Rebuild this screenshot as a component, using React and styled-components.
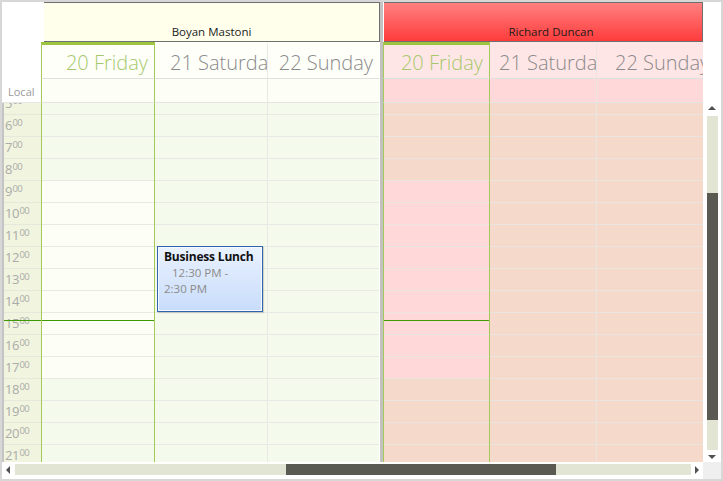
import React from 'react';
import styled, { createGlobalStyle, css } from 'styled-components';

const GlobalStyle = createGlobalStyle`
  body {
    margin: 0;
    background: #fff;
    font-family: "Open Sans", "Noto Sans", sans-serif;
  }
`;

const ROW = 22;
const HOURS = Array.from({ length: 18 }, (_, i) => 5 + i);
const NOW_TOP = 228;

const isWork = (h) => h >= 9 && h <= 17;

const themes = {
  boyan: {
    header: '#ffffec',
    dayHead: '#fefff9',
    allDay: '#fdfff6',
    work: '#fdfff6',
    off: '#f5fbec',
    line: '#e8e9e4',
  },
  richard: {
    header: 'linear-gradient(#ff8080, #ff3c3c)',
    dayHead: '#ffe6e6',
    allDay: '#ffd9d9',
    work: '#ffd9d9',
    off: '#f5d9cb',
    line: '#ebe5e1',
  },
};

const resources = [
  {
    name: 'Boyan Mastoni',
    theme: 'boyan',
    width: 339,
    inset: 3,
    shift: 0,
    days: [
      { label: '20 Friday', width: 114, today: true, pad: 6 },
      { label: '21 Saturday', width: 113, weekend: true, pad: 15, event: true },
      { label: '22 Sunday', width: 112, weekend: true, pad: 6, last: true },
    ],
  },
  {
    name: 'Richard Duncan',
    theme: 'richard',
    width: 320,
    inset: 1,
    shift: 16,
    days: [
      { label: '20 Friday', width: 107, today: true, pad: 6 },
      { label: '21 Saturday', width: 107, weekend: true, pad: 9 },
      { label: '22 Sunday', width: 113, weekend: true, pad: 18, left: true },
    ],
  },
];

const Scheduler = styled.div`
  width: 723px;
  height: 481px;
  box-sizing: border-box;
  border: 2px solid #d7d7d7;
  display: flex;
  flex-direction: column;
  overflow: hidden;
  background: #fff;
`;

const Main = styled.div`
  display: flex;
  height: 460px;
`;

const TimeColumn = styled.div`
  width: 39px;
  flex: none;
  display: flex;
  flex-direction: column;
`;

const TimeHead = styled.div`
  height: 77px;
  background: #fff;
`;

const LocalCell = styled.div`
  height: 24px;
  box-sizing: border-box;
  border-bottom: 1px solid #e6e6e6;
  display: flex;
  align-items: flex-end;
  padding: 0 0 3px 6px;
  font-size: 11px;
  color: #9a9a9a;
  position: relative;
  z-index: 1;
`;

const TimeBody = styled.div`
  flex: 1;
  overflow: hidden;
  background: #f1f4de;
  border-left: 2px solid #c4c4c4;
`;

const Stack = styled.div`
  position: relative;
  margin-top: -11px;
`;

const TimeRow = styled.div`
  height: ${ROW}px;
  box-sizing: border-box;
  border-top: 1px solid #e6e8dc;
  padding: 2px 0 0 1px;
  font-size: 13px;
  line-height: 16px;
  color: #ababab;
  letter-spacing: -0.5px;
`;

const Minutes = styled.span`
  display: inline-block;
  vertical-align: top;
  font-size: 9.5px;
  line-height: 12px;
  margin-left: 0.5px;
`;

const NowLine = styled.div`
  position: absolute;
  top: ${NOW_TOP}px;
  left: ${(p) => p.$from || 0}px;
  right: 0;
  height: 1px;
  background: #3d9a00;
  z-index: 2;
`;

const Separator = styled.div`
  width: 3px;
  flex: none;
  background: #c2c2c2;
`;

const ResourceGroup = styled.div`
  width: ${(p) => p.$width}px;
  flex: none;
  display: flex;
  flex-direction: column;
  overflow: hidden;
`;

const ResourceHeader = styled.div`
  height: 40px;
  box-sizing: border-box;
  margin-left: ${(p) => p.$inset}px;
  border: 1px solid #6f6f6f;
  border-left: none;
  background: ${(p) => p.$bg};
  display: flex;
  align-items: flex-end;
  justify-content: center;
  padding: 0 0 2px ${(p) => p.$shift}px;
  font-size: 11.5px;
  color: #1c1c1c;
  white-space: nowrap;
`;

const Row = styled.div`
  display: flex;
  height: ${(p) => p.$h}px;
  flex: ${(p) => (p.$grow ? 1 : 'none')};
  overflow: hidden;
`;

const todayBorders = css`
  border-left: 1px solid #a6ca5a;
  border-right: 1px solid #a6ca5a;
`;

const Cell = styled.div`
  width: ${(p) => p.$width}px;
  flex: none;
  box-sizing: border-box;
  border-right: 1px solid ${(p) => (p.$last ? 'transparent' : p.$line)};
  ${(p) => p.$today && todayBorders}
`;

const DayHead = styled(Cell)`
  background: ${(p) => p.$bg};
  border-bottom: 1px solid #e0e0e0;
  border-top: 3px solid ${(p) => (p.$today ? '#9cc43e' : p.$bg)};
  padding: 4px 6px 0 ${(p) => p.$pad}px;
  text-align: ${(p) => (p.$left ? 'left' : 'right')};
  white-space: nowrap;
  overflow: hidden;
  font-size: 20px;
  font-weight: 300;
  line-height: 28px;
  color: ${(p) => (p.$today ? '#a6c86c' : '#8a8a8a')};
`;

const AllDayCell = styled(Cell)`
  background: ${(p) => p.$bg};
  border-bottom: 1px solid #e4e4e4;
`;

const DayColumn = styled(Cell)`
  overflow: visible;
`;

const Slot = styled.div`
  height: ${ROW}px;
  box-sizing: border-box;
  border-top: 1px solid ${(p) => p.$line};
  background: ${(p) => p.$bg};
`;

const Appointment = styled.div`
  position: absolute;
  top: ${7 * ROW}px;
  left: 2px;
  width: 106px;
  height: 66px;
  box-sizing: border-box;
  border: 1px solid #3263ad;
  box-shadow: inset 0 0 0 1px #f4f8ff, 1px 1px 1px rgba(0, 0, 0, 0.15);
  background: linear-gradient(#eaf2ff, #c8dcfa);
  padding: 2px 6px;
  font-size: 12px;
  line-height: 16px;
  z-index: 3;
`;

const Subject = styled.div`
  font-weight: 700;
  color: #111;
  letter-spacing: -0.2px;
`;

const When = styled.div`
  color: #8b8b8b;
  text-indent: ${(p) => (p.$indent ? 8 : 0)}px;
  font-size: 11.5px;
`;

const VScroll = styled.div`
  width: 18px;
  flex: none;
  display: flex;
  flex-direction: column;
  padding-top: 98px;
  box-sizing: border-box;
`;

const ArrowBox = styled.div`
  width: ${(p) => (p.$w ? `${p.$w}px` : 'auto')};
  height: ${(p) => p.$h}px;
  box-sizing: border-box;
  display: flex;
  align-items: center;
  justify-content: ${(p) => p.$justify || 'center'};
  padding-left: ${(p) => p.$pl || 0}px;
  flex: none;
`;

const Tri = styled.div`
  width: 0;
  height: 0;
  ${(p) =>
    p.$dir === 'up' &&
    css`
      border-left: 4px solid transparent;
      border-right: 4px solid transparent;
      border-bottom: 4px solid #505050;
    `}
  ${(p) =>
    p.$dir === 'down' &&
    css`
      border-left: 4px solid transparent;
      border-right: 4px solid transparent;
      border-top: 4px solid #505050;
    `}
  ${(p) =>
    p.$dir === 'left' &&
    css`
      border-top: 4px solid transparent;
      border-bottom: 4px solid transparent;
      border-right: 4px solid #505050;
    `}
  ${(p) =>
    p.$dir === 'right' &&
    css`
      border-top: 4px solid transparent;
      border-bottom: 4px solid transparent;
      border-left: 4px solid #505050;
    `}
`;

const VTrack = styled.div`
  width: 11px;
  margin-left: 4px;
  height: 334px;
  background: #e3e5d4;
  position: relative;
  flex: none;
`;

const HBar = styled.div`
  height: 17px;
  display: flex;
`;

const HScroll = styled.div`
  width: 701px;
  display: flex;
  align-items: flex-start;
`;

const HTrack = styled.div`
  width: 676px;
  height: 11px;
  margin-top: 2px;
  background: #e3e5d4;
  position: relative;
`;

const Thumb = styled.div`
  position: absolute;
  background: #5a5a52;
`;

const Corner = styled.div`
  flex: 1;
  background: #efefef;
`;

function TimeRuler() {
  return (
    <TimeColumn>
      <TimeHead />
      <LocalCell>Local</LocalCell>
      <TimeBody>
        <Stack>
          {HOURS.map((h) => (
            <TimeRow key={h}>
              {h}
              <Minutes>00</Minutes>
            </TimeRow>
          ))}
          <NowLine $from={-2} />
        </Stack>
      </TimeBody>
    </TimeColumn>
  );
}

function Resource({ res }) {
  const t = themes[res.theme];
  return (
    <ResourceGroup $width={res.width}>
      <ResourceHeader $bg={t.header} $inset={res.inset} $shift={res.shift}>
        {res.name}
      </ResourceHeader>
      <Row $h={37}>
        {res.days.map((d) => (
          <DayHead
            key={d.label}
            $width={d.width}
            $today={d.today}
            $last={d.last}
            $line={t.line}
            $bg={t.dayHead}
            $pad={d.pad}
            $left={d.left}
          >
            {d.label}
          </DayHead>
        ))}
      </Row>
      <Row $h={24}>
        {res.days.map((d) => (
          <AllDayCell
            key={d.label}
            $width={d.width}
            $today={d.today}
            $last={d.last}
            $line={t.line}
            $bg={t.allDay}
          />
        ))}
      </Row>
      <Row $grow>
        {res.days.map((d) => (
          <DayColumn
            key={d.label}
            $width={d.width}
            $today={d.today}
            $last={d.last}
            $line={t.line}
          >
            <Stack>
              {HOURS.map((h) => (
                <Slot
                  key={h}
                  $line={t.line}
                  $bg={!d.weekend && isWork(h) ? t.work : t.off}
                />
              ))}
              {d.today && <NowLine />}
              {d.event && (
                <Appointment>
                  <Subject>Business Lunch</Subject>
                  <When $indent>12:30 PM -</When>
                  <When>2:30 PM</When>
                </Appointment>
              )}
            </Stack>
          </DayColumn>
        ))}
      </Row>
    </ResourceGroup>
  );
}

export default function App() {
  return (
    <>
      <GlobalStyle />
      <Scheduler>
        <Main>
          <TimeRuler />
          <Resource res={resources[0]} />
          <Separator />
          <Resource res={resources[1]} />
          <VScroll>
            <ArrowBox $h={16}>
              <Tri $dir="up" />
            </ArrowBox>
            <VTrack>
              <Thumb style={{ top: 77, left: 0, right: 0, height: 227 }} />
            </VTrack>
            <ArrowBox $h={14}>
              <Tri $dir="down" />
            </ArrowBox>
          </VScroll>
        </Main>
        <HBar>
          <HScroll>
            <ArrowBox $w={13} $h={15} $justify="flex-start" $pl={4}>
              <Tri $dir="left" />
            </ArrowBox>
            <HTrack>
              <Thumb style={{ left: 271, width: 270, top: 0, bottom: 0 }} />
            </HTrack>
            <ArrowBox $w={12} $h={15}>
              <Tri $dir="right" />
            </ArrowBox>
          </HScroll>
          <Corner />
        </HBar>
      </Scheduler>
    </>
  );
}
